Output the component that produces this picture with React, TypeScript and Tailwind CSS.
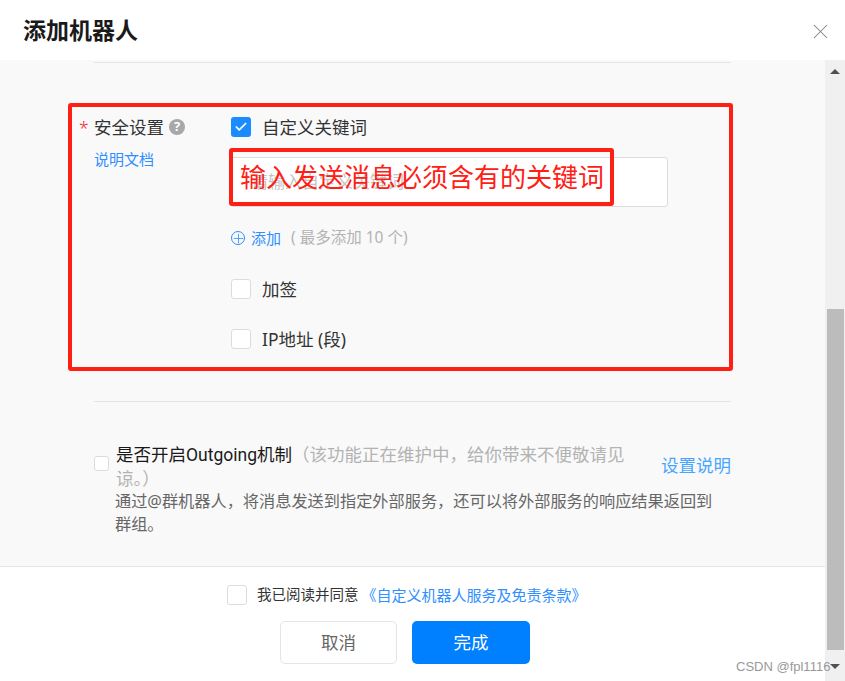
import { Check, Plus, X } from 'lucide-react';

const RED = 'border-[4px] border-[#ff2015] rounded-[3px]';

function Box({ className = '' }: { className?: string }) {
  return <span className={`block shrink-0 rounded-[3px] border border-[#dcdcdc] bg-white ${className}`} />;
}

function OptionRow({ label, className = '' }: { label: string; className?: string }) {
  return (
    <div className={`flex items-center ${className}`}>
      <Box className="h-5 w-5" />
      <span className="ml-[11px] text-[17.5px] leading-6 text-[#333]">{label}</span>
    </div>
  );
}

export default function App() {
  return (
    <div className="relative flex h-[681px] w-[845px] flex-col overflow-hidden bg-white font-['Noto_Sans','Noto_Sans_CJK_SC',sans-serif]">
      {/* header */}
      <div className="flex h-[60px] shrink-0 items-center justify-between pl-[23px] pr-[12px]">
        <h1 className="text-[23px] font-bold text-[#1a1a1a]">添加机器人</h1>
        <X className="mt-[2px] h-[25px] w-[25px] text-[#808080]" strokeWidth={1} />
      </div>

      <div className="flex min-h-0 flex-1">
        <div className="flex min-w-0 flex-1 flex-col">
          {/* scrolling form */}
          <div className="h-[506px] shrink-0 bg-[#f9f9f9] pl-[94px] pr-[94px]">
            <div className="mt-[2px] border-t border-[#e5e5e5] pt-[52px]">
              <div className="flex">
                <div className="w-[137px] shrink-0">
                  <div className="relative flex h-6 items-center text-[17.5px] text-[#333]">
                    <span className="absolute -left-[15px] top-0 font-light text-[#f5222d]">*</span>
                    安全设置
                    <span className="ml-[5px] flex h-4 w-4 items-center justify-center rounded-full bg-[#a8a8a8] text-[13px] font-bold text-white">?</span>
                  </div>
                  <a className="mt-[10px] block text-[15px] leading-5 text-[#2f8fff]">说明文档</a>
                </div>
                <div className="w-[437px]">
                  <div className="flex items-center">
                    <span className="flex h-5 w-5 items-center justify-center rounded-[3px] bg-[#1a8cff]">
                      <Check className="h-[14px] w-[14px] text-white" strokeWidth={3} />
                    </span>
                    <span className="ml-[11px] text-[17.5px] leading-6 text-[#333]">自定义关键词</span>
                  </div>
                  <div className="mt-[18px] flex h-[50px] items-center rounded-[3px] border border-[#dcdcdc] bg-white pl-[19px] text-[17px] text-[#c4c4c4]">
                    请输入自定义关键词
                  </div>
                  <div className="mt-[21px] flex h-5 items-center">
                    <span className="flex h-[14px] w-[14px] shrink-0 items-center justify-center rounded-full border border-[#2f8fff]">
                      <Plus className="h-[15px] w-[15px] shrink-0 text-[#2f8fff]" strokeWidth={1.3} />
                    </span>
                    <span className="ml-[6px] text-[15px] text-[#2f8fff]">添加</span>
                    <span className="ml-[10px] text-[15.5px] text-[#b3b3b3]">( 最多添加 10 个)</span>
                  </div>
                  <OptionRow label="加签" className="mt-[29px]" />
                  <OptionRow label="IP地址 (段)" className="mt-[26px]" />
                </div>
              </div>
              <div className="mt-[50px] border-t border-[#e5e5e5] pt-[41px]">
                <div className="flex items-start">
                  <Box className="mt-[13px] h-[15px] w-[15px] bg-[#f9f9f9]" />
                  <div className="ml-[7px] flex-1">
                    <div className="flex items-center">
                      <p className="w-[520px] text-[17.5px] leading-[23px] text-[#1a1a1a]">
                        是否开启<span className="font-['Roboto','Noto_Sans_CJK_SC',sans-serif]">Outgoing</span>机制
                        <span className="text-[#b3b3b3]">（该功能正在维护中，给你带来不便敬请见谅。）</span>
                      </p>
                      <a className="-mt-[3px] ml-[25px] whitespace-nowrap text-[17.5px] text-[#46a6ff]">设置说明</a>
                    </div>
                    <p className="-ml-px max-w-[612px] text-[16.2px] leading-[23px] text-[#666]">
                      通过@群机器人，将消息发送到指定外部服务，还可以将外部服务的响应结果返回到群组。
                    </p>
                  </div>
                </div>
              </div>
            </div>
          </div>

          {/* footer */}
          <div className="flex-1 border-t border-[#e5e5e5] bg-white">
            <div className="mt-[17px] flex items-center pl-[227px]">
              <Box className="h-5 w-5" />
              <span className="ml-[10px] text-[14.5px] text-[#333]">我已阅读并同意</span>
              <a className="ml-[3px] text-[15px] text-[#2f8fff]">《自定义机器人服务及免责条款》</a>
            </div>
            <div className="mt-[14px] flex gap-[15px] pl-[280px]">
              <button className="h-[43px] w-[117px] rounded-[5px] border border-[#e5e5e5] bg-white text-[17.5px] text-[#666]">取消</button>
              <button className="h-[43px] w-[118px] rounded-[5px] bg-[#0080ff] text-[17.5px] text-white">完成</button>
            </div>
          </div>
        </div>

        {/* scrollbar */}
        <div className="flex w-5 shrink-0 flex-col items-center bg-[#f0f0f0]">
          <span className="mt-[9px] h-0 w-0 border-x-[5px] border-b-[5px] border-x-transparent border-b-[#505050]" />
          <span className="mt-[235px] h-[341px] w-[17px] bg-[#bcbcbc]" />
          <span className="mt-[14px] h-0 w-0 border-x-[5px] border-t-[5px] border-x-transparent border-t-[#505050]" />
        </div>
      </div>

      {/* annotations drawn over the page */}
      <div className={`absolute left-[68px] top-[103px] h-[268px] w-[665px] ${RED}`} />
      <div className={`absolute left-[229px] top-[148px] flex h-[58px] w-[385px] items-center pl-[7px] pt-[1px] text-[26px] text-[#ff2015] ${RED}`}>
        输入发送消息必须含有的关键词
      </div>
      <span className="absolute left-[736px] top-[657px] font-['Liberation_Sans',sans-serif] text-[13px] text-[#999]">CSDN @fpl1116</span>
    </div>
  );
}
